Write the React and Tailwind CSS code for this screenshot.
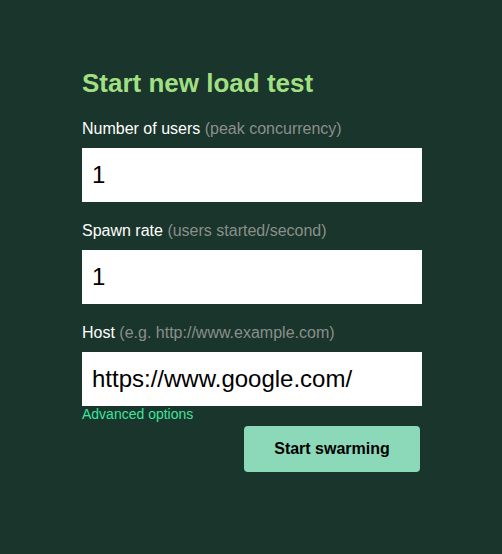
export default function App() {
  const font = { fontFamily: '"Liberation Sans", Arial, sans-serif' };
  return (
    <div className="w-[502px] h-[554px] bg-[#1a352b] overflow-hidden" style={font}>
      <div className="pt-[68px] pl-[82px] w-[422px] flex flex-col">
        <h2 className="text-[26px] leading-[30px] font-bold text-[#a0df82]">Start new load test</h2>
        <label className="mt-[22px] text-[16px] leading-[18px] text-white">
          Number of users <span className="text-[#8a8f8c]">(peak concurrency)</span>
        </label>
        <input
          className="mt-[10px] h-[54px] w-[340px] bg-white px-[10px] text-[24px] text-black outline-none"
          style={font}
          defaultValue="1"
        />
        <label className="mt-[20px] text-[16px] leading-[18px] text-white">
          Spawn rate <span className="text-[#8a8f8c]">(users started/second)</span>
        </label>
        <input
          className="mt-[10px] h-[54px] w-[340px] bg-white px-[10px] text-[24px] text-black outline-none"
          style={font}
          defaultValue="1"
        />
        <label className="mt-[20px] text-[16px] leading-[18px] text-white">
          Host <span className="text-[#8a8f8c]">(e.g. http://www.example.com)</span>
        </label>
        <input
          className="mt-[10px] h-[54px] w-[340px] bg-white px-[10px] text-[24px] text-black outline-none"
          style={font}
          defaultValue="https://www.google.com/"
        />
        <a className="text-[14px] leading-[15px] pt-[1px] text-[#3de39e] cursor-pointer">Advanced options</a>
        <div className="flex justify-end w-[338px] mt-[4px]">
          <button
            className="w-[176px] h-[46px] rounded-[4px] bg-[#8bd9b9] text-[16px] font-bold text-black"
            style={font}
          >
            Start swarming
          </button>
        </div>
      </div>
    </div>
  );
}
